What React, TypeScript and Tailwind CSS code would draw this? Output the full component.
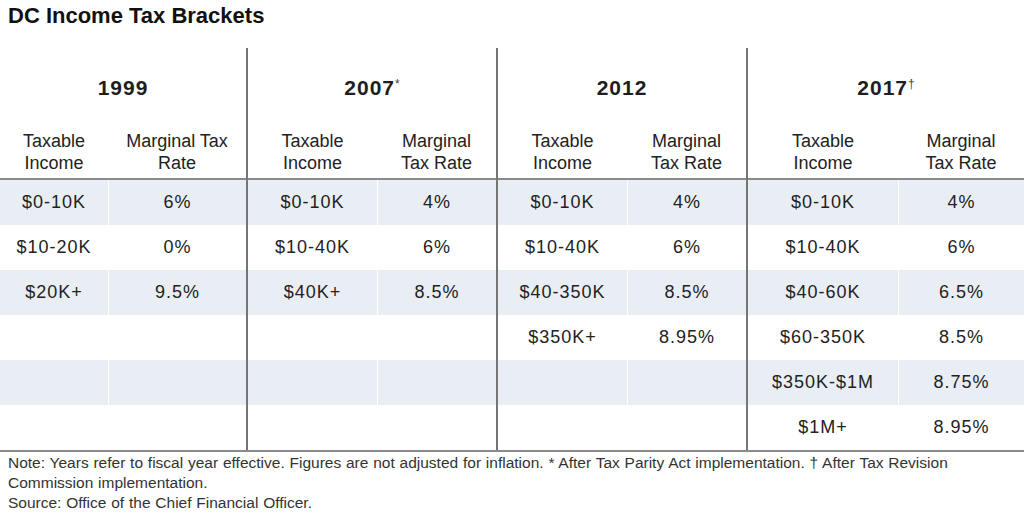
import React from "react";

type Group = {
  year: string;
  mark?: string;
  w: string;
  c1: string;
  c2: string;
  first: boolean;
  rateHead: React.ReactNode;
  rows: [string, string][];
};

const groups: Group[] = [
  {
    year: "1999",
    w: "w-[246px]",
    c1: "w-[108px]",
    c2: "flex-1",
    first: true,
    rateHead: (
      <>
        Marginal Tax
        <br />
        Rate
      </>
    ),
    rows: [
      ["$0-10K", "6%"],
      ["$10-20K", "0%"],
      ["$20K+", "9.5%"],
    ],
  },
  {
    year: "2007",
    mark: "*",
    w: "w-[250px]",
    c1: "w-[129px]",
    c2: "flex-1",
    first: false,
    rateHead: (
      <>
        Marginal
        <br />
        Tax Rate
      </>
    ),
    rows: [
      ["$0-10K", "4%"],
      ["$10-40K", "6%"],
      ["$40K+", "8.5%"],
    ],
  },
  {
    year: "2012",
    w: "w-[250px]",
    c1: "w-[129px]",
    c2: "flex-1",
    first: false,
    rateHead: (
      <>
        Marginal
        <br />
        Tax Rate
      </>
    ),
    rows: [
      ["$0-10K", "4%"],
      ["$10-40K", "6%"],
      ["$40-350K", "8.5%"],
      ["$350K+", "8.95%"],
    ],
  },
  {
    year: "2017",
    mark: "†",
    w: "flex-1",
    c1: "w-[150px]",
    c2: "flex-1",
    first: false,
    rateHead: (
      <>
        Marginal
        <br />
        Tax Rate
      </>
    ),
    rows: [
      ["$0-10K", "4%"],
      ["$10-40K", "6%"],
      ["$40-60K", "6.5%"],
      ["$60-350K", "8.5%"],
      ["$350K-$1M", "8.75%"],
      ["$1M+", "8.95%"],
    ],
  },
];

function GroupCol({ g }: { g: Group }) {
  const rows: [string, string][] = [];
  for (let i = 0; i < 6; i++) rows.push(g.rows[i] ?? ["", ""]);
  return (
    <div
      className={`${g.w} flex flex-col ${g.first ? "" : "border-l-2 border-[#767676]"}`}
    >
      <div className="h-[132px] border-b-2 border-[#8a8a8a] flex flex-col">
        <div className="pt-[28px] h-[52px] text-center text-[21px] leading-[24px] font-bold tracking-[1px] text-[#1e1e1e]">
          {g.year}
          {g.mark && (
            <span className="relative -top-[7px] text-[12px] font-normal tracking-normal text-[#444]">
              {g.mark}
            </span>
          )}
        </div>
        <div className="mt-[30px] flex text-[18px] leading-[22px] text-[#222]">
          <div className={`${g.c1} text-center`}>
            Taxable
            <br />
            Income
          </div>
          <div className={`${g.c2} text-center`}>{g.rateHead}</div>
        </div>
      </div>
      {rows.map((r, i) => (
        <div
          key={i}
          className={`flex h-[45px] text-[18px] tracking-[1px] text-[#222] ${i % 2 === 0 ? "bg-[#e9eef5]" : "bg-white"}`}
        >
          <div className={`${g.c1} flex items-center justify-center`}>{r[0]}</div>
          <div className={`${g.c2} flex items-center justify-center border-l border-white`}>
            {r[1]}
          </div>
        </div>
      ))}
    </div>
  );
}

export default function App() {
  return (
    <div
      className="w-[1024px] h-[520px] bg-white overflow-hidden"
      style={{ fontFamily: '"Liberation Sans", Arial, sans-serif' }}
    >
      <div className="h-[48px] pt-[2px] pl-[8px] text-[22px] leading-[28px] font-bold text-[#111]">
        DC Income Tax Brackets
      </div>
      <div className="flex border-b-2 border-[#8a8a8a]">
        {groups.map((g) => (
          <GroupCol key={g.year} g={g} />
        ))}
      </div>
      <div className="pl-[8px] pt-[1px] text-[15.5px] leading-[20px] [word-spacing:0.5px] text-[#333]">
        Note: Years refer to fiscal year effective. Figures are not adjusted for inflation. * After Tax Parity Act implementation. † After Tax Revision
        <br />
        Commission implementation.
        <br />
        Source: Office of the Chief Financial Officer.
      </div>
    </div>
  );
}
